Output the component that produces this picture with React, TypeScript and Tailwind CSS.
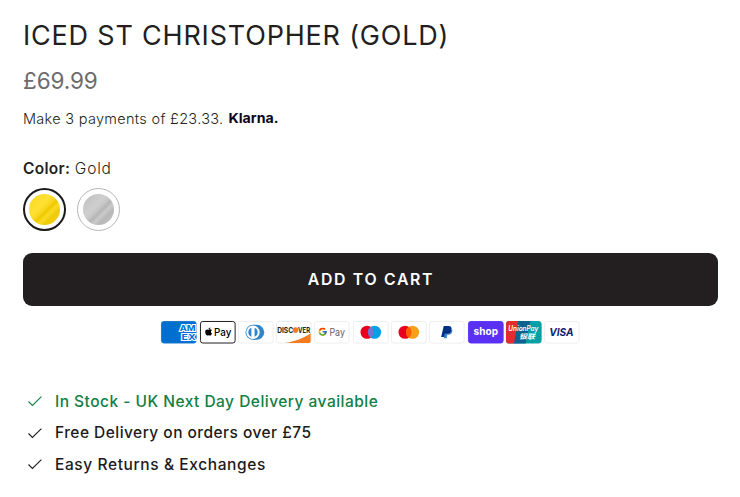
import type { ReactNode } from 'react';
import { FaApple } from 'react-icons/fa';
import { FcGoogle } from 'react-icons/fc';

function Card({ label, fill = '#fff', border = '#ededed', children }: { label: string; fill?: string; border?: string; children: ReactNode }) {
  return (
    <svg viewBox="0 0 38 24" className="h-[22.5px] w-[35.6px] overflow-visible" role="img" aria-label={label}>
      <rect x="0.5" y="0.5" width="37" height="23" rx="2.5" fill={fill} stroke={border} />
      {children}
    </svg>
  );
}

function PaymentIcons() {
  return (
    <div className="mt-[15px] flex justify-center gap-[2.7px] font-['Inter',sans-serif]">
      <Card label="American Express" fill="#016fd0" border="#1873c8">
        <g fill="#016fd0" stroke="#fff" strokeWidth="1.9" paintOrder="stroke" fontSize="7.7" fontWeight="700">
          <text x="20" y="10.6" textLength="17" lengthAdjust="spacingAndGlyphs">AM</text>
          <text x="22" y="20" textLength="15" lengthAdjust="spacingAndGlyphs">EX</text>
        </g>
      </Card>
      <Card label="Apple Pay" border="#111">
        <FaApple x={4.2} y={6.2} size={10} color="#000" />
        <text x="15" y="15.8" fontSize="11" fontWeight="500" fill="#000" textLength="18.5" lengthAdjust="spacingAndGlyphs">Pay</text>
      </Card>
      <Card label="Diners Club">
        <path d="M16 4h4a8 8 0 0 1 0 16h-4z" fill="#3086c8" />
        <circle cx="16" cy="12" r="8" fill="#3086c8" />
        <circle cx="16" cy="12" r="7.1" fill="#fff" />
        <path d="M14.3 7.3a5 5 0 0 0 0 9.4zM17.7 7.3v9.4a5 5 0 0 0 0-9.4z" fill="#3086c8" />
      </Card>
      <Card label="Discover">
        <path d="M37 13v8.5a2 2 0 0 1-2 2H9C20 22 30 18 37 13z" fill="#f47b20" />
        <g fontSize="7.8" fontWeight="700" fill="#231f20">
          <text x="1.3" y="12.4" textLength="17" lengthAdjust="spacingAndGlyphs">DISC</text>
          <text x="23.5" y="12.4" textLength="13" lengthAdjust="spacingAndGlyphs">VER</text>
        </g>
        <circle cx="20.8" cy="9.7" r="3" fill="#f47b20" />
      </Card>
      <Card label="Google Pay">
        <FcGoogle x={4} y={6.2} size={10.5} />
        <text x="16.5" y="15.7" fontSize="10.5" fill="#5f6368" textLength="16.5" lengthAdjust="spacingAndGlyphs">Pay</text>
      </Card>
      <Card label="Maestro">
        <circle cx="15" cy="12" r="7" fill="#eb001b" />
        <circle cx="23" cy="12" r="7" fill="#00a2e5" />
        <path d="M19 6.25a7 7 0 0 1 0 11.5 7 7 0 0 1 0-11.5z" fill="#7375cf" />
      </Card>
      <Card label="Mastercard">
        <circle cx="15" cy="12" r="7" fill="#eb001b" />
        <circle cx="23" cy="12" r="7" fill="#f79e1b" />
        <path d="M19 6.25a7 7 0 0 1 0 11.5 7 7 0 0 1 0-11.5z" fill="#ff5f00" />
      </Card>
      <Card label="PayPal">
        <path d="M15.7 5.3h5.2c2.5 0 3.6 1.6 3.1 3.7-.5 2.6-2.1 3.7-4.6 3.7h-1.7l-.9 4.3H13z" fill="#003087" />
        <path d="M24.1 8.2c.8.8 1 1.8.7 3-.5 2.5-2.2 3.4-4.2 3.4h-1.1l-.7 3.9h-3l.9-4.8h2.2c2.8 0 4.7-1.7 5.2-5.5z" fill="#3086c8" />
        <path d="m16.7 13.4.5-1.4h2.3c2.3 0 3.8-1.1 4.3-3 .3 3.1-2.2 4.6-4.8 4.6z" fill="#012169" />
      </Card>
      <Card label="Shop Pay" fill="#5a31f4" border="#5a31f4">
        <text x="6" y="15" fontSize="10.5" fontWeight="700" fill="#fff" textLength="26" lengthAdjust="spacingAndGlyphs">shop</text>
      </Card>
      <Card label="UnionPay" fill="#00a0a5" border="#00a0a5">
        <path d="M3 0h11L9 24H3a3 3 0 0 1-3-3V3a3 3 0 0 1 3-3z" fill="#e22c2e" />
        <path d="M13 0h13l-5 24H8.5z" fill="#0e638e" />
        <text fill="#fff" fontStyle="italic" className="font-['Inter','Noto_Sans_CJK_SC',sans-serif]">
          <tspan x="2.5" y="11" fontSize="7.6" fontWeight="600" textLength="32" lengthAdjust="spacingAndGlyphs">UnionPay</tspan>
          <tspan x="14" y="19" fontSize="7.4" fontWeight="700" textLength="17" lengthAdjust="spacingAndGlyphs">银联</tspan>
        </text>
      </Card>
      <Card label="Visa">
        <text x="5.5" y="16.2" fontSize="11.6" fontWeight="700" fontStyle="italic" fill="#172274" textLength="26" lengthAdjust="spacingAndGlyphs">VISA</text>
      </Card>
    </div>
  );
}

function Check() {
  return (
    <svg viewBox="0 0 16 12" className="h-3 w-4" fill="none" stroke="currentColor" strokeWidth="1.1">
      <path d="m1.5 6.5 3.9 3.9 9-8.7" />
    </svg>
  );
}

export default function App() {
  return (
    <main className="h-[497px] w-[740px] bg-white pl-[23px] pr-[22px] pt-[18px] font-['Inter',sans-serif] text-[#231f20]">
      <h1 className="h-9 whitespace-nowrap text-[27px] leading-9 tracking-[0.8px]">ICED ST CHRISTOPHER (GOLD)</h1>
      <p className="mt-[11px] h-8 text-[22.5px] leading-8 tracking-[-0.1px] text-[#6c6a6b]">£69.99</p>
      <div className="mt-2.5 flex h-6 items-center">
        <p className="whitespace-nowrap text-[14.5px] font-light leading-6 tracking-[0.3px]">Make 3 payments of £23.33.</p>
        <svg viewBox="0 0 52 20" className="ml-[5px] h-5 w-[52px]" role="img" aria-label="Klarna">
          <text x="0.5" y="14" fontSize="13.5" fontWeight="700" fill="#0b051d" textLength="50" lengthAdjust="spacingAndGlyphs">Klarna.</text>
        </svg>
      </div>

      <p className="mt-[26px] h-6 text-[15.5px] font-light leading-6 tracking-[0.2px]">
        <span className="font-semibold tracking-[0.3px]">Color:</span> <span className="tracking-[0.8px]">Gold</span>
      </p>
      <div className="mt-[7px] flex gap-[11px]">
        <button aria-label="Gold" className="size-[43px] rounded-full border-2 border-[#1c1b1b] p-1">
          <span className="block size-full rounded-full bg-[linear-gradient(135deg,#f9d51e_0%,#ffe135_38%,#f9d821_48%,#efc900_56%,#fbdc25_64%,#efca06_74%,#f9d71c_100%)]" />
        </button>
        <button aria-label="Silver" className="size-[43px] rounded-full border border-[#b5b5b5] p-[5px]">
          <span className="block size-full rounded-full bg-[linear-gradient(135deg,#bdbdbd_0%,#cfcfcf_38%,#c8c8c8_48%,#b5b5b5_56%,#cacaca_64%,#b8b8b8_74%,#c5c5c5_100%)]" />
        </button>
      </div>

      <button className="mt-[22px] h-[53px] w-full rounded-[9px] bg-[#231f20] pl-px text-[15.8px] font-semibold tracking-[1.7px] text-white">ADD TO CART</button>
      <PaymentIcons />

      <ul className="mt-[42px] text-[15.5px] font-[450] text-[#1c1b1b]">
        <li className="flex h-[31.5px] items-center gap-3 pl-1 tracking-[0.48px] text-[#108043]">
          <Check />
          In Stock - UK Next Day Delivery available
        </li>
        <li className="flex h-[31.5px] items-center gap-3 pl-1 tracking-[0.46px]">
          <Check />
          Free Delivery on orders over £75
        </li>
        <li className="flex h-[31.5px] items-center gap-3 pl-1 tracking-[0.6px]">
          <Check />
          Easy Returns &amp; Exchanges
        </li>
      </ul>
    </main>
  );
}
